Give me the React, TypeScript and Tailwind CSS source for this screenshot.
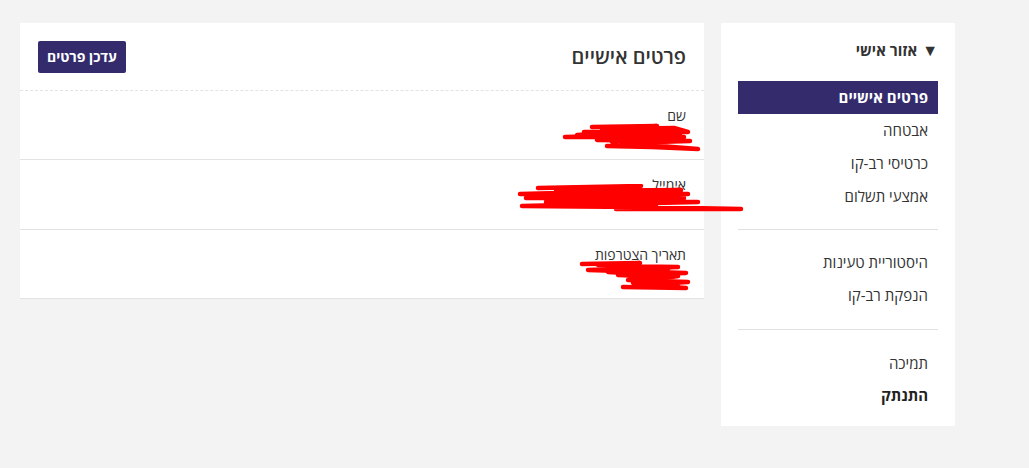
import React from 'react';

const menuTop = [
  { label: 'פרטים אישיים', active: true },
  { label: 'אבטחה' },
  { label: 'כרטיסי רב-קו' },
  { label: 'אמצעי תשלום' },
];

const menuMid = [{ label: 'היסטוריית טעינות' }, { label: 'הנפקת רב-קו' }];

function Scribble({ w, h, paths }: { w: number; h: number; paths: string[] }) {
  return (
    <svg width={w} height={h} viewBox={`0 0 ${w} ${h}`} className="block">
      {paths.map((d, i) => (
        <path
          key={i}
          d={d}
          fill="none"
          stroke="#ff0000"
          strokeWidth={4.5}
          strokeLinecap="round"
          strokeLinejoin="round"
        />
      ))}
    </svg>
  );
}

const rows = [
  {
    label: 'שם',
    h: 'h-[69px]',
    scribble: {
      right: 2,
      top: 32,
      w: 140,
      h: 30,
      paths: [
        'M30 4 L95 3 L50 6 L112 5 L126 9 L22 9 L118 11 L3 14 L122 14 L35 17 L128 18 L60 20 L136 26 L90 24 L45 23',
        'M40 6 L100 7 L15 12 L110 16 L50 19',
      ],
    },
  },
  {
    label: 'אימייל',
    h: 'h-[70px]',
    scribble: {
      right: -40,
      top: 24,
      w: 228,
      h: 30,
      paths: [
        'M22 4 L125 2 L40 7 L165 6 L4 10 L172 10 L10 14 L168 14 L30 18 L182 18 L6 22 L120 23 L225 25 L100 25',
        'M50 5 L150 8 L20 12 L160 16 L40 20 L140 21',
      ],
    },
  },
  {
    label: 'תאריך הצטרפות',
    h: 'h-[69px]',
    scribble: {
      right: 12,
      top: 30,
      w: 114,
      h: 32,
      paths: [
        'M4 4 L62 3 L30 6 L100 7 L10 10 L108 13 L40 15 L88 17 L50 20 L110 22 L60 25 L108 28 L45 27',
        'M20 5 L90 9 L30 12 L100 16 L55 23 L100 26',
      ],
    },
  },
];

export default function App() {
  return (
    <div
      dir="rtl"
      className="min-h-[468px] w-full bg-[#f3f3f3] pt-[23px] pr-[74px] pl-[20px]"
      style={{ fontFamily: '"Open Sans", "Liberation Sans", Arial, sans-serif' }}
    >
      <div className="flex items-start gap-[17px]">
        {/* Sidebar */}
        <aside className="w-[234px] shrink-0 bg-white px-[17px] pt-[15px] pb-[16px]">
          <div className="mb-[19px] flex h-[24px] items-center gap-[5px] text-[15px] font-bold text-[#333]">
            <span className="text-[16px] leading-none text-[#333]">▼</span>
            <span>אזור אישי</span>
          </div>
          <nav>
            {menuTop.map((item) => (
              <div
                key={item.label}
                className={`flex h-[33px] items-center px-[10px] text-[15px] ${
                  item.active ? 'bg-[#342b6c] font-bold text-white' : 'text-[#333]'
                }`}
              >
                {item.label}
              </div>
            ))}
            <div className="my-[16px] h-px bg-[#e1e1e1]" />
            {menuMid.map((item) => (
              <div key={item.label} className="flex h-[33px] items-center px-[10px] text-[15px] text-[#333]">
                {item.label}
              </div>
            ))}
            <div className="mt-[17px] mb-[17px] h-px bg-[#e1e1e1]" />
            <div className="flex h-[33px] items-center px-[10px] text-[15px] text-[#333]">תמיכה</div>
            <div className="flex h-[30px] items-center px-[10px] text-[15px] font-bold text-[#222]">התנתק</div>
          </nav>
        </aside>

        {/* Main card */}
        <main className="flex-1 bg-white">
          <div className="flex h-[68px] items-center justify-between border-b border-dashed border-[#e3e3e3] px-[18px]">
            <h1 className="text-[20px] font-semibold text-[#333]">פרטים אישיים</h1>
            <button className="h-[32px] rounded-[2px] bg-[#342b6c] px-[9px] text-[14px] font-bold text-white">
              עדכן פרטים
            </button>
          </div>
          {rows.map((row) => (
            <div key={row.label} className={`relative ${row.h} border-b border-[#e3e3e3] px-[18px] pt-[16px]`}>
              <div className="text-[14px] leading-[18px] text-[#333]">{row.label}</div>
              <div className="h-[18px] text-[14px] leading-[18px] text-[#333]"></div>
              <div className="absolute" style={{ right: row.scribble.right, top: row.scribble.top }}>
                <Scribble w={row.scribble.w} h={row.scribble.h} paths={row.scribble.paths} />
              </div>
            </div>
          ))}
        </main>
      </div>
    </div>
  );
}
